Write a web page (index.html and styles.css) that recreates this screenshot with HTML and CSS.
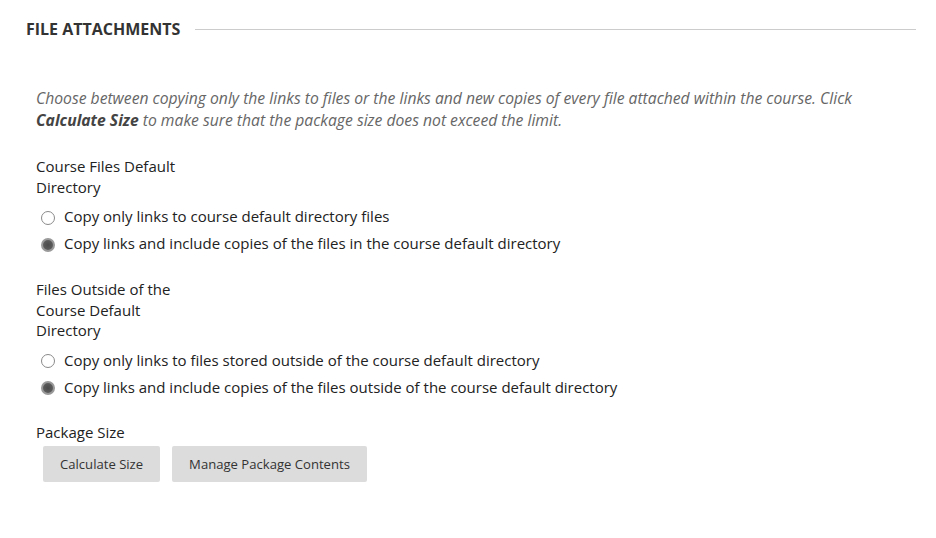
FILE: index.html
```html
<!DOCTYPE html>
<html lang="en">
<head>
    <meta charset="UTF-8">
    <title>File Attachments</title>
    <link rel="stylesheet" href="styles.css">
</head>
<body>
    <div class="section">
        <!-- Заголовок секции -->
        <div class="section-head">
            <h2>FILE ATTACHMENTS</h2>
            <div class="head-line"></div>
        </div>

        <p class="instructions">Choose between copying only the links to files or the links and new copies of every file attached within the course. Click <b>Calculate Size</b> to make sure that the package size does not exceed the limit.</p>

        <div class="field field-first">
            <div class="field-label">Course Files Default Directory</div>
            <ul class="radio-list">
                <li><label><input type="radio" name="defaultDir"> Copy only links to course default directory files</label></li>
                <li><label><input type="radio" name="defaultDir" checked> Copy links and include copies of the files in the course default directory</label></li>
            </ul>
        </div>

        <div class="field">
            <div class="field-label">Files Outside of the Course Default Directory</div>
            <ul class="radio-list">
                <li><label><input type="radio" name="outsideDir"> Copy only links to files stored outside of the course default directory</label></li>
                <li><label><input type="radio" name="outsideDir" checked> Copy links and include copies of the files outside of the course default directory</label></li>
            </ul>
        </div>

        <div class="field field-last">
            <div class="field-label">Package Size</div>
            <div class="buttons">
                <button type="button">Calculate Size</button>
                <button type="button">Manage Package Contents</button>
            </div>
        </div>
    </div>
</body>
</html>
```

FILE: styles.css
```css
* {
    margin: 0;
    padding: 0;
    box-sizing: border-box;
}

body {
    font-family: 'Open Sans', 'Liberation Sans', sans-serif;
    background-color: #fff;
    color: #222;
    font-size: 15px;
}

.section {
    padding: 19px 20px 0 26px;
}

/* Заголовок */
.section-head {
    display: flex;
    align-items: center;
    gap: 15px;
}

.section-head h2 {
    font-size: 16px;
    font-weight: 700;
    line-height: 20px;
    color: #333;
}

.head-line {
    flex: 1;
    height: 1px;
    background-color: #ccc;
}

.instructions {
    margin: 48px 0 0 10px;
    font-size: 15.7px;
    font-style: italic;
    line-height: 22px;
    color: #666;
}

.instructions b {
    color: #444;
}

.field {
    margin-left: 10px;
    margin-top: 22px;
}

.field-first {
    margin-top: 25px;
}

.field-label {
    width: 155px;
    line-height: 20.5px;
    color: #222;
}

.radio-list {
    list-style: none;
    margin-top: 6px;
}

.radio-list li {
    line-height: 27px;
}

.radio-list label {
    display: flex;
    align-items: center;
    gap: 9px;
    padding-left: 5px;
}

input[type="radio"] {
    appearance: none;
    -webkit-appearance: none;
    flex-shrink: 0;
    width: 14px;
    height: 14px;
    border: 1px solid #8a8a8a;
    border-radius: 50%;
    background-color: #fff;
    margin: 2px 0 0 0;
}

input[type="radio"]:checked {
    border: 2px solid #999;
    background: radial-gradient(circle, #4a4a4a 0, #5a5a5a 60%, #747474 100%);
}

.field-last {
    margin-top: 21px;
}

.buttons {
    display: flex;
    gap: 12px;
    margin: 4px 0 0 7px;
}

button {
    font-family: inherit;
    font-size: 13.1px;
    color: #333;
    background-color: #dcdcdc;
    border: none;
    border-radius: 2px;
    height: 36px;
    padding: 0 17px;
}
```
